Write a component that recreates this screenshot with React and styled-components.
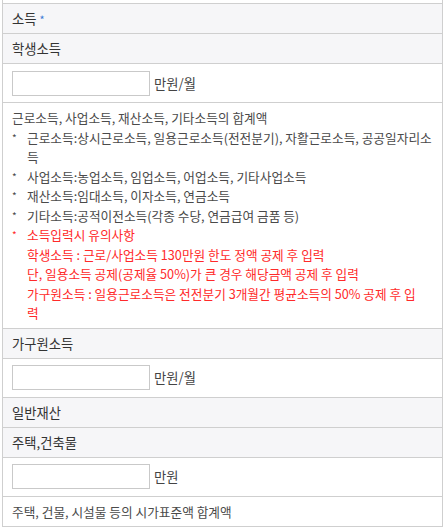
import React from "react";
import styled, { createGlobalStyle } from "styled-components";

const Global = createGlobalStyle`
  html, body { margin: 0; padding: 0; background: #fff; }
  body { font-family: "Noto Sans CJK KR", "Noto Sans", sans-serif; }
`;

const Table = styled.div`
  margin-left: 2px;
  width: 441px;
  box-sizing: border-box;
  border-left: 1px solid #cfcfcf;
  border-right: 1px solid #cfcfcf;
  display: flex;
  flex-direction: column;
`;

const Cut = styled.div`
  height: 4px;
  border-bottom: 1px solid #cfcfcf;
  box-sizing: border-box;
  background: #fff;
`;

const Header = styled.div`
  height: 30px;
  box-sizing: border-box;
  border-bottom: 1px solid #cfcfcf;
  background: #f6f6f8;
  display: flex;
  align-items: center;
  padding: 0 9px;
  font-size: 13.3px;
  color: #333;
`;

const Req = styled.span`
  color: #3a7bd5;
  margin-left: 3px;
  font-size: 11px;
`;

const InputRow = styled.div`
  height: 39px;
  box-sizing: border-box;
  border-bottom: 1px solid #cfcfcf;
  background: #fff;
  display: flex;
  align-items: center;
  padding: 0 0 0 9px;
  gap: 4px;
`;

const Field = styled.input`
  width: 138px;
  height: 25px;
  box-sizing: border-box;
  border: 1px solid #c9c9c9;
  outline: none;
  padding: 0 4px;
  margin: 0;
  font-size: 12px;
`;

const Unit = styled.span`
  font-size: 13.3px;
  color: #444;
`;

const Desc = styled.div`
  box-sizing: border-box;
  border-bottom: 1px solid #cfcfcf;
  background: #fff;
  padding: ${(p) => p.$pad || "5px 8px 5px 9px"};
  font-size: 12.7px;
  line-height: 19.5px;
  color: #4a4a4a;
`;

const Line = styled.div`
  display: flex;
  color: ${(p) => (p.$red ? "#ff2a2a" : "inherit")};
  padding-left: ${(p) => (p.$indent ? "15px" : "0")};
`;

const Star = styled.span`
  flex: 0 0 15px;
  font-size: 10px;
`;

const Text = styled.span`
  flex: 1;
`;

export default function App() {
  return (
    <>
      <Global />
      <Table>
        <Cut />
        <Header>
          소득<Req>*</Req>
        </Header>
        <Header>학생소득</Header>
        <InputRow>
          <Field />
          <Unit>만원/월</Unit>
        </InputRow>
        <Desc>
          <Line>근로소득, 사업소득, 재산소득, 기타소득의 합계액</Line>
          <Line>
            <Star>*</Star>
            <Text>근로소득:상시근로소득, 일용근로소득(전전분기), 자활근로소득, 공공일자리소득</Text>
          </Line>
          <Line>
            <Star>*</Star>
            <Text>사업소득:농업소득, 임업소득, 어업소득, 기타사업소득</Text>
          </Line>
          <Line>
            <Star>*</Star>
            <Text>재산소득:임대소득, 이자소득, 연금소득</Text>
          </Line>
          <Line>
            <Star>*</Star>
            <Text>기타소득:공적이전소득(각종 수당, 연금급여 금품 등)</Text>
          </Line>
          <Line $red>
            <Star>*</Star>
            <Text>소득입력시 유의사항</Text>
          </Line>
          <Line $red $indent>
            <Text>학생소득 : 근로/사업소득 130만원 한도 정액 공제 후 입력</Text>
          </Line>
          <Line $red $indent>
            <Text>단, 일용소득 공제(공제율 50%)가 큰 경우 해당금액 공제 후 입력</Text>
          </Line>
          <Line $red $indent>
            <Text>
              가구원소득 : 일용근로소득은 전전분기 3개월간 평균소득의 50% 공제 후 입
              <br />력
            </Text>
          </Line>
        </Desc>
        <Header>가구원소득</Header>
        <InputRow>
          <Field />
          <Unit>만원/월</Unit>
        </InputRow>
        <Header>일반재산</Header>
        <Header>주택,건축물</Header>
        <InputRow>
          <Field />
          <Unit>만원</Unit>
        </InputRow>
        <Desc $pad="5px 9px 5px 9px">
          <Line>주택, 건물, 시설물 등의 시가표준액 합계액</Line>
        </Desc>
      </Table>
    </>
  );
}
